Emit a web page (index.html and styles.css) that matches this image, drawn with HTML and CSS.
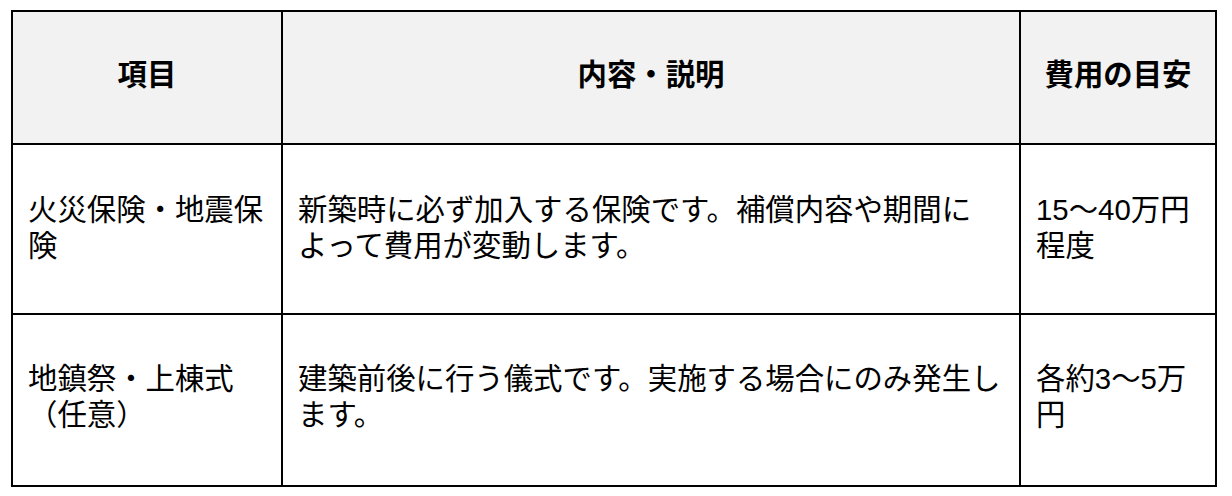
FILE: index.html
```html
<!DOCTYPE html>
<html lang="ja">
<head>
<meta charset="utf-8">
<title>費用の目安</title>
<link rel="stylesheet" href="styles.css">
</head>
<body>
<table class="cost-table">
  <colgroup>
    <col class="col-item">
    <col class="col-desc">
    <col class="col-cost">
  </colgroup>
  <thead>
    <tr>
      <th>項目</th>
      <th>内容・説明</th>
      <th>費用の目安</th>
    </tr>
  </thead>
  <tbody>
    <tr>
      <td>火災保険・地震保険</td>
      <td>新築時に必ず加入する保険です。補償内容や期間に<br>よって費用が変動します。</td>
      <td>15〜40万円程度</td>
    </tr>
    <tr class="row-last">
      <td>地鎮祭・上棟式（任意）</td>
      <td>建築前後に行う儀式です。実施する場合にのみ発生し<br>ます。</td>
      <td>各約3〜5万円</td>
    </tr>
  </tbody>
</table>
</body>
</html>
```

FILE: styles.css
```css
html, body {
  margin: 0;
  padding: 0;
  background: #ffffff;
}

body {
  padding: 10px 0 0 11px;
  font-family: "Liberation Sans", "Noto Sans CJK JP", sans-serif;
  color: #000000;
}

.cost-table {
  width: 1206px;
  table-layout: fixed;
  border-collapse: separate;
  border-spacing: 0;
  border-top: 2px solid #000;
  border-left: 2px solid #000;
}

.col-item { width: 270px; }
.col-desc { width: 738px; }
.col-cost { width: 196px; }

.cost-table th,
.cost-table td {
  box-sizing: border-box;
  border-right: 2px solid #000;
  border-bottom: 2px solid #000;
  font-size: 29.4px;
  line-height: 36px;
  padding: 45px 15px 50px;
  vertical-align: top;
  text-align: left;
  word-break: normal;
}

.cost-table th {
  background: #f2f2f2;
  font-weight: 700;
  text-align: center;
}

.cost-table td {
  font-weight: 400;
  padding-top: 47px;
  padding-bottom: 49px;
}

.cost-table .row-last td {
  padding-top: 46px;
  padding-bottom: 52px;
}
```
